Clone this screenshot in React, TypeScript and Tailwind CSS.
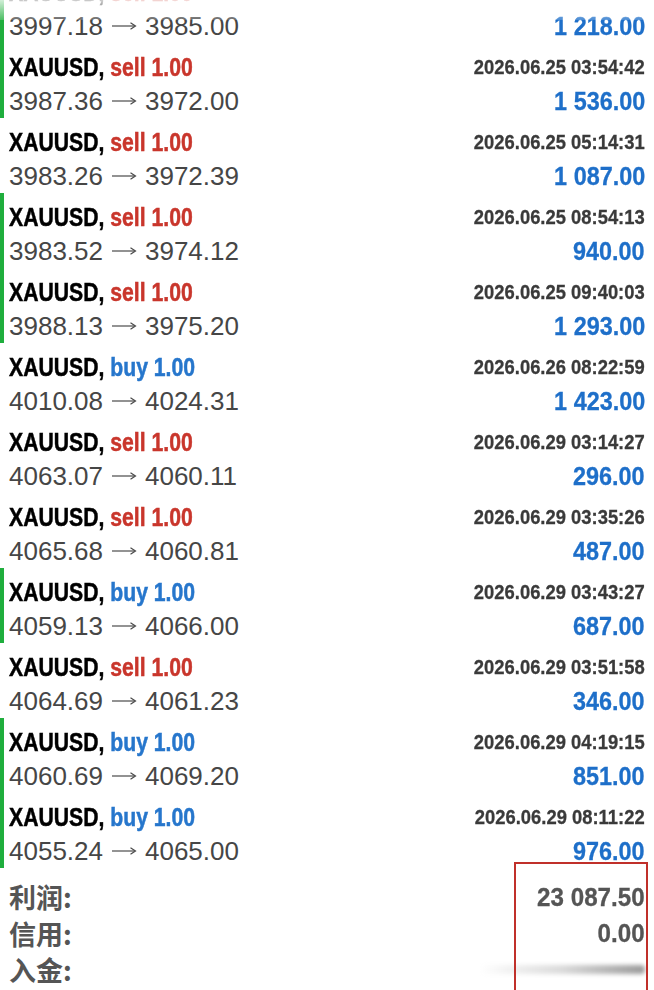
import React from "react";

type Row = {
  side: "buy" | "sell";
  open: string;
  close: string;
  time: string;
  profit: string;
  green: boolean;
};

const rows: Row[] = [
  { side: "sell", open: "3997.18", close: "3985.00", time: "2026.06.25 02:10:05", profit: "1 218.00", green: true },
  { side: "sell", open: "3987.36", close: "3972.00", time: "2026.06.25 03:54:42", profit: "1 536.00", green: true },
  { side: "sell", open: "3983.26", close: "3972.39", time: "2026.06.25 05:14:31", profit: "1 087.00", green: false },
  { side: "sell", open: "3983.52", close: "3974.12", time: "2026.06.25 08:54:13", profit: "940.00", green: true },
  { side: "sell", open: "3988.13", close: "3975.20", time: "2026.06.25 09:40:03", profit: "1 293.00", green: true },
  { side: "buy", open: "4010.08", close: "4024.31", time: "2026.06.26 08:22:59", profit: "1 423.00", green: false },
  { side: "sell", open: "4063.07", close: "4060.11", time: "2026.06.29 03:14:27", profit: "296.00", green: false },
  { side: "sell", open: "4065.68", close: "4060.81", time: "2026.06.29 03:35:26", profit: "487.00", green: false },
  { side: "buy", open: "4059.13", close: "4066.00", time: "2026.06.29 03:43:27", profit: "687.00", green: true },
  { side: "sell", open: "4064.69", close: "4061.23", time: "2026.06.29 03:51:58", profit: "346.00", green: false },
  { side: "buy", open: "4060.69", close: "4069.20", time: "2026.06.29 04:19:15", profit: "851.00", green: true },
  { side: "buy", open: "4055.24", close: "4065.00", time: "2026.06.29 08:11:22", profit: "976.00", green: true },
];

function Arrow() {
  return (
    <svg width="26" height="12" viewBox="0 0 26 12" className="mx-[8px] inline-block" aria-hidden>
      <line x1="1" y1="6" x2="24" y2="6" stroke="#4a4a4a" strokeWidth="1.2" />
      <path d="M19.5 2.8 L24.5 6 L19.5 9.2" fill="none" stroke="#4a4a4a" strokeWidth="1.2" />
    </svg>
  );
}

function TradeRow({ r }: { r: Row }) {
  return (
    <div className="flex h-[75px] font-['Liberation_Sans',Arial,sans-serif]">
      <div className={r.green ? "w-[4px] bg-[#1fae3d]" : "w-[4px]"} />
      <div className="flex flex-1 flex-col pl-[5px] pr-[9px] pt-[7px]">
        <div className="flex h-[34px] items-center justify-between">
          <div className="origin-left scale-x-[0.815] whitespace-nowrap text-[26px] font-bold leading-none [-webkit-text-stroke:0.5px_currentColor]">
            <span className="text-black">XAUUSD, </span>
            <span className={r.side === "sell" ? "text-[#c9362c]" : "text-[#2676cc]"}>
              {r.side} 1.00
            </span>
          </div>
          <div className="origin-right scale-x-[0.92] whitespace-nowrap text-[20px] font-bold leading-none text-[#3a3a3a] [-webkit-text-stroke:0.3px_currentColor]">
            {r.time}
          </div>
        </div>
        <div className="flex h-[34px] items-center justify-between">
          <div className="flex items-center whitespace-nowrap text-[26px] leading-none text-[#464646]">
            <span>{r.open}</span>
            <Arrow />
            <span>{r.close}</span>
          </div>
          <div className="origin-right scale-x-[0.9] whitespace-nowrap text-[26px] font-bold leading-none text-[#1e6fc9] [-webkit-text-stroke:0.3px_currentColor]">
            {r.profit}
          </div>
        </div>
      </div>
    </div>
  );
}

export default function App() {
  return (
    <div className="relative h-[990px] w-[654px] overflow-hidden bg-white">
      <div className="-mt-[32px]">
        {rows.map((r, i) => (
          <TradeRow key={i} r={r} />
        ))}
      </div>
      <div className="flex flex-col pl-[9px] pr-[9px] pt-[10px] text-[#555555]">
        <div className="flex h-[37px] items-center justify-between">
          <span className="font-['Noto_Sans_CJK_SC',sans-serif] text-[27px] font-bold leading-none">利润:</span>
          <span className="origin-right scale-x-[0.93] font-['Liberation_Sans',Arial,sans-serif] text-[26px] font-bold leading-none [-webkit-text-stroke:0.3px_currentColor]">
            23 087.50
          </span>
        </div>
        <div className="flex h-[36px] items-center justify-between">
          <span className="font-['Noto_Sans_CJK_SC',sans-serif] text-[27px] font-bold leading-none">信用:</span>
          <span className="origin-right scale-x-[0.93] font-['Liberation_Sans',Arial,sans-serif] text-[26px] font-bold leading-none [-webkit-text-stroke:0.3px_currentColor]">
            0.00
          </span>
        </div>
        <div className="flex h-[36px] items-center justify-between">
          <span className="font-['Noto_Sans_CJK_SC',sans-serif] text-[27px] font-bold leading-none">入金:</span>
          <span className="h-[9px] w-[165px] rounded-sm bg-gradient-to-r from-white via-[#dadada] to-[#9a9a9a] blur-[2px]" />
        </div>
      </div>
      <div className="pointer-events-none absolute left-0 top-0 h-[20px] w-full bg-gradient-to-b from-white/80 to-white/20" />
      <div className="pointer-events-none absolute left-[514px] top-[862px] h-[140px] w-[134px] border-2 border-[#c0302a]" />
    </div>
  );
}
